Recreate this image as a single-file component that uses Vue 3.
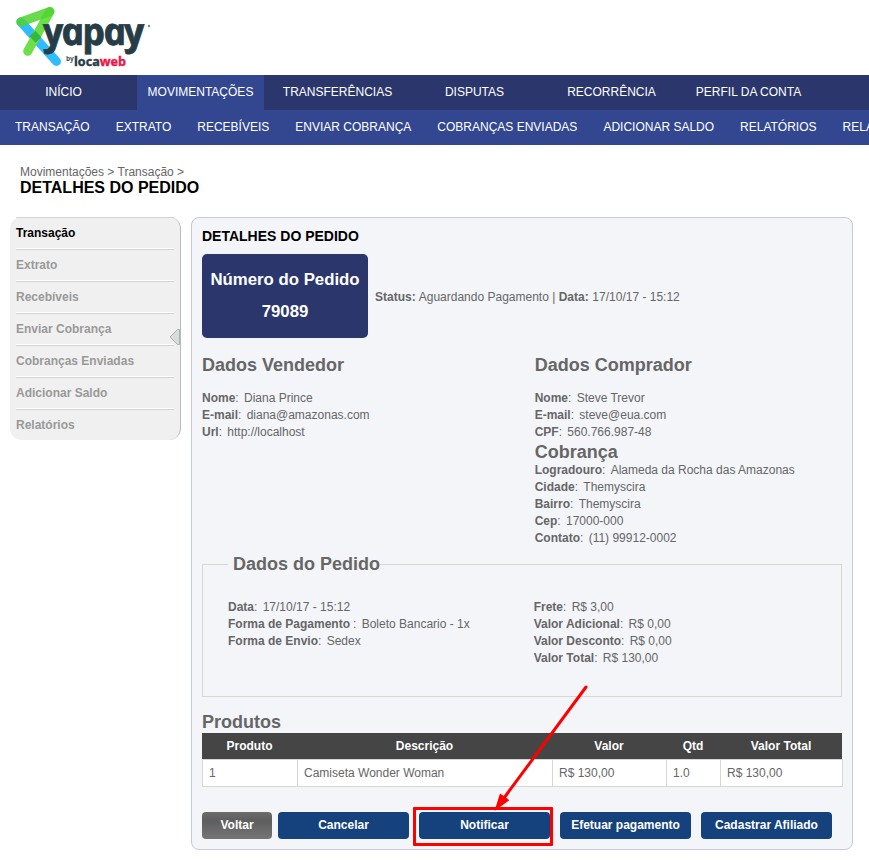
<script setup>
const tabs = ['INÍCIO', 'MOVIMENTAÇÕES', 'TRANSFERÊNCIAS', 'DISPUTAS', 'RECORRÊNCIA', 'PERFIL DA CONTA']
const subTabs = ['TRANSAÇÃO', 'EXTRATO', 'RECEBÍVEIS', 'ENVIAR COBRANÇA', 'COBRANÇAS ENVIADAS', 'ADICIONAR SALDO', 'RELATÓRIOS', 'RELATÓRIOS']
const sideItems = ['Transação', 'Extrato', 'Recebíveis', 'Enviar Cobrança', 'Cobranças Enviadas', 'Adicionar Saldo', 'Relatórios']
const seller = [
  ['Nome', 'Diana Prince'],
  ['E-mail', 'diana@amazonas.com'],
  ['Url', 'http://localhost'],
]
const buyer = [
  ['Nome', 'Steve Trevor'],
  ['E-mail', 'steve@eua.com'],
  ['CPF', '560.766.987-48'],
]
const billing = [
  ['Logradouro', 'Alameda da Rocha das Amazonas'],
  ['Cidade', 'Themyscira'],
  ['Bairro', 'Themyscira'],
  ['Cep', '17000-000'],
  ['Contato', '(11) 99912-0002'],
]
const order = [
  ['Data', '17/10/17 - 15:12'],
  ['Forma de Pagamento', 'Boleto Bancario - 1x', true],
  ['Forma de Envio', 'Sedex'],
]
const totals = [
  ['Frete', 'R$ 3,00'],
  ['Valor Adicional', 'R$ 0,00'],
  ['Valor Desconto', 'R$ 0,00'],
  ['Valor Total', 'R$ 130,00'],
]
const columns = ['Produto', 'Descrição', 'Valor', 'Qtd', 'Valor Total']
const product = ['1', 'Camiseta Wonder Woman', 'R$ 130,00', '1.0', 'R$ 130,00']
</script>

<template>
  <div class="page">
    <header class="top">
      <svg class="logo" width="160" height="75" viewBox="0 0 160 75">
        <path d="M21 22 L56.500 61.500" stroke="#30bdff" stroke-width="9" stroke-linecap="round" />
        <path d="M50 11.500 L27.700 51.300" stroke="#6cdf49" stroke-width="9" stroke-linecap="round" />
        <path d="M20.700 22 L49.800 11.500" stroke="#4fd42f" stroke-opacity=".85" stroke-width="9" stroke-linecap="round" />
        <path d="M32.500 33.500 L38.500 40" stroke="#35b73a" stroke-width="8" />
        <text class="brand" transform="translate(45.500 45) skewX(12)" x="0" y="0" textLength="99" lengthAdjust="spacingAndGlyphs">yapay</text>
        <circle cx="149" cy="26" r="1.200" fill="#7d888d" />
        <text class="by" x="66" y="61">by</text>
        <text class="loca" x="74" y="65.700" textLength="52" lengthAdjust="spacingAndGlyphs">loca<tspan fill="#ee1546" stroke="#ee1546">web</tspan></text>
      </svg>
    </header>
    <nav class="tabs">
      <a v-for="(t, i) in tabs" :key="t" :class="{ active: i === 1 }">{{ t }}</a>
    </nav>
    <nav class="subtabs">
      <a v-for="(t, i) in subTabs" :key="i">{{ t }}</a>
    </nav>

    <div class="heading">
      <div class="crumbs">Movimentações &gt; Transação &gt;</div>
      <h1>DETALHES DO PEDIDO</h1>
    </div>

    <div class="body">
      <aside class="side">
        <a v-for="(s, i) in sideItems" :key="s" :class="{ current: i === 0 }">{{ s }}</a>
        <svg class="pointer" width="12" height="18" viewBox="0 0 12 18">
          <path d="M10.500 1.500 H8.500 L1 9 L8.500 16.500 H10.500 Z" fill="#d8dcdc" stroke="#a9b1b1" />
        </svg>
      </aside>

      <main class="panel">
        <h2>DETALHES DO PEDIDO</h2>
        <div class="summary">
          <div class="number"><span>Número do Pedido</span><span>79089</span></div>
          <div class="status"><b>Status:</b> Aguardando Pagamento | <b>Data:</b> 17/10/17 - 15:12</div>
        </div>

        <div class="people">
          <section>
            <h3>Dados Vendedor</h3>
            <div v-for="r in seller" :key="r[0]" class="row"><b>{{ r[0] }}</b>:<span>{{ r[1] }}</span></div>
          </section>
          <section>
            <h3>Dados Comprador</h3>
            <div v-for="r in buyer" :key="r[0]" class="row"><b>{{ r[0] }}</b>:<span>{{ r[1] }}</span></div>
            <h3 class="tight">Cobrança</h3>
            <div v-for="r in billing" :key="r[0]" class="row"><b>{{ r[0] }}</b>:<span>{{ r[1] }}</span></div>
          </section>
        </div>

        <fieldset>
          <legend>Dados do Pedido</legend>
          <div class="order">
            <div>
              <div v-for="r in order" :key="r[0]" class="row"><b :class="{ spaced: r[2] }">{{ r[0] }}</b>:<span>{{ r[1] }}</span></div>
            </div>
            <div>
              <div v-for="r in totals" :key="r[0]" class="row"><b>{{ r[0] }}</b>:<span>{{ r[1] }}</span></div>
            </div>
          </div>
        </fieldset>

        <h3 class="products">Produtos</h3>
        <div class="thead"><div v-for="c in columns" :key="c">{{ c }}</div></div>
        <div class="trow"><div v-for="(c, i) in product" :key="i">{{ c }}</div></div>

        <div class="actions">
          <button class="back">Voltar</button>
          <button>Cancelar</button>
          <button class="marked">Notificar<i class="marker"></i></button>
          <button>Efetuar pagamento</button>
          <button>Cadastrar Afiliado</button>
        </div>
      </main>
    </div>

    <svg class="arrow" width="110" height="140" viewBox="486 680 110 140">
      <path d="M586 687 L504 798" stroke="#fe0000" stroke-width="3" stroke-linecap="round" />
      <path d="M494.500 811 L500 793.500 L504.500 796.500 L509.300 800.200 Z" fill="#fe0000" />
    </svg>
  </div>
</template>

<style>
body { margin: 0; background: #fff; overflow: hidden; }
</style>

<style scoped>
.page {
  position: relative;
  width: 869px;
  height: 862px;
  overflow: hidden;
  font: 12px/17px "Liberation Sans", Arial, sans-serif;
  color: #666;
}
.top { height: 75px; }
.logo { display: block; fill: none; }
.brand { font: italic bold 38px "Open Sans", sans-serif; letter-spacing: -2px; fill: #263c47; stroke: #263c47; stroke-width: .7; }
.by { font: bold 6.500px "Open Sans", sans-serif; fill: #46565f; }
.loca { font: bold 13px "Open Sans", sans-serif; fill: #263c47; stroke: #263c47; stroke-width: .4; }
.tabs { display: flex; gap: 10px; height: 35px; background: #2b376c; }
.tabs a { flex: none; width: 127px; line-height: 34px; text-align: center; color: #fff; }
.tabs .active { background: #334790; }
.subtabs { display: flex; gap: 26px; height: 35px; padding-left: 15px; background: #334790; overflow: hidden; }
.subtabs a { flex: none; line-height: 34px; color: #fff; white-space: nowrap; }
.heading { height: 52px; padding: 20px 20px 0; }
.crumbs { height: 14px; line-height: 15px; }
h1 { margin: 0; font-size: 16px; line-height: 17px; color: #000; }
.body { display: flex; gap: 10px; padding-left: 10px; align-items: flex-start; }
.side {
  position: relative;
  box-sizing: border-box;
  width: 171px;
  height: 223px;
  padding: 0 6px;
  background: #f0f0f0;
  border-right: 1px solid #b5bcbc;
  border-radius: 12px;
}
.side a {
  display: block;
  box-sizing: border-box;
  width: 158px;
  height: 32px;
  line-height: 30px;
  border-top: 1px solid #d2d2d2;
  border-bottom: 1px solid #fff;
  font-weight: bold;
  color: #999;
}
.side a:last-of-type { height: 31px; border-bottom: 0; }
.side .current { color: #000; }
.pointer { position: absolute; right: -1px; top: 111px; fill: none; }
.panel {
  box-sizing: border-box;
  width: 662px;
  height: 633px;
  padding: 0 10px;
  background: #f3f5f9;
  border: 1px solid #c4c8e1;
  border-radius: 8px;
}
h2 { margin: 0; font-size: 14px; line-height: 36px; color: #000; }
.summary { display: flex; align-items: center; gap: 7px; height: 84px; }
.status { padding-top: 2px; }
.status b { margin-right: .4px; }
.number {
  display: flex;
  flex-direction: column;
  box-sizing: border-box;
  width: 166px;
  height: 84px;
  padding-top: 10px;
  border-radius: 5px;
  background: #2b376c;
  color: #fff;
  font-size: 16.8px;
  font-weight: bold;
  line-height: 32px;
  text-align: center;
}
.people { display: grid; grid-template-columns: 332.700px 1fr; height: 216px; }
h3 { margin: 17px 0 15px; font-size: 18px; line-height: 20px; }
h3.tight { height: 21px; margin: 0; line-height: 23px; }
.row { height: 17px; white-space: nowrap; }
.row span { margin-left: 5.300px; }
.spaced { margin-right: 3px; }
fieldset { box-sizing: border-box; width: 640px; height: 143px; margin: 0; padding: 25px 25px 0; border: 1px solid #d6d8d4; }
legend { padding: 0 0 0 5px; font-size: 18px; font-weight: bold; line-height: 20px; }
.order { display: grid; grid-template-columns: 305.700px 1fr; }
h3.products { margin: 15px 0 0; line-height: 21px; }
.thead, .trow { display: grid; grid-template-columns: 95px 255px 114px 54px 1fr; }
.thead { width: 640px; height: 26px; line-height: 27px; background: #454545; color: #fff; font-weight: bold; text-align: center; }
.trow { box-sizing: border-box; width: 641px; height: 28px; line-height: 26px; background: #fff; border: solid #d6d8d4; border-width: 1px 1px 1px 0; }
.trow div { padding-left: 6px; border-left: 1px solid #d6d8d4; }
.actions { display: flex; gap: 10px; margin-top: 25px; }
button {
  position: relative;
  width: 131px;
  height: 27px;
  padding: 0;
  border: 0;
  border-radius: 4px;
  background: #15427c;
  color: #fff;
  font: bold 12px/25px "Liberation Sans", Arial, sans-serif;
}
.back { width: 70px; margin-right: -4px; background: linear-gradient(#6c6c6c 0, #5e5e5e 30%, #757575 100%); }
.marker { position: absolute; left: -6px; top: -5px; width: 134px; height: 33px; border: 3px solid #fe0000; border-radius: 1px; }
.arrow { position: absolute; left: 486px; top: 680px; fill: none; }
</style>
